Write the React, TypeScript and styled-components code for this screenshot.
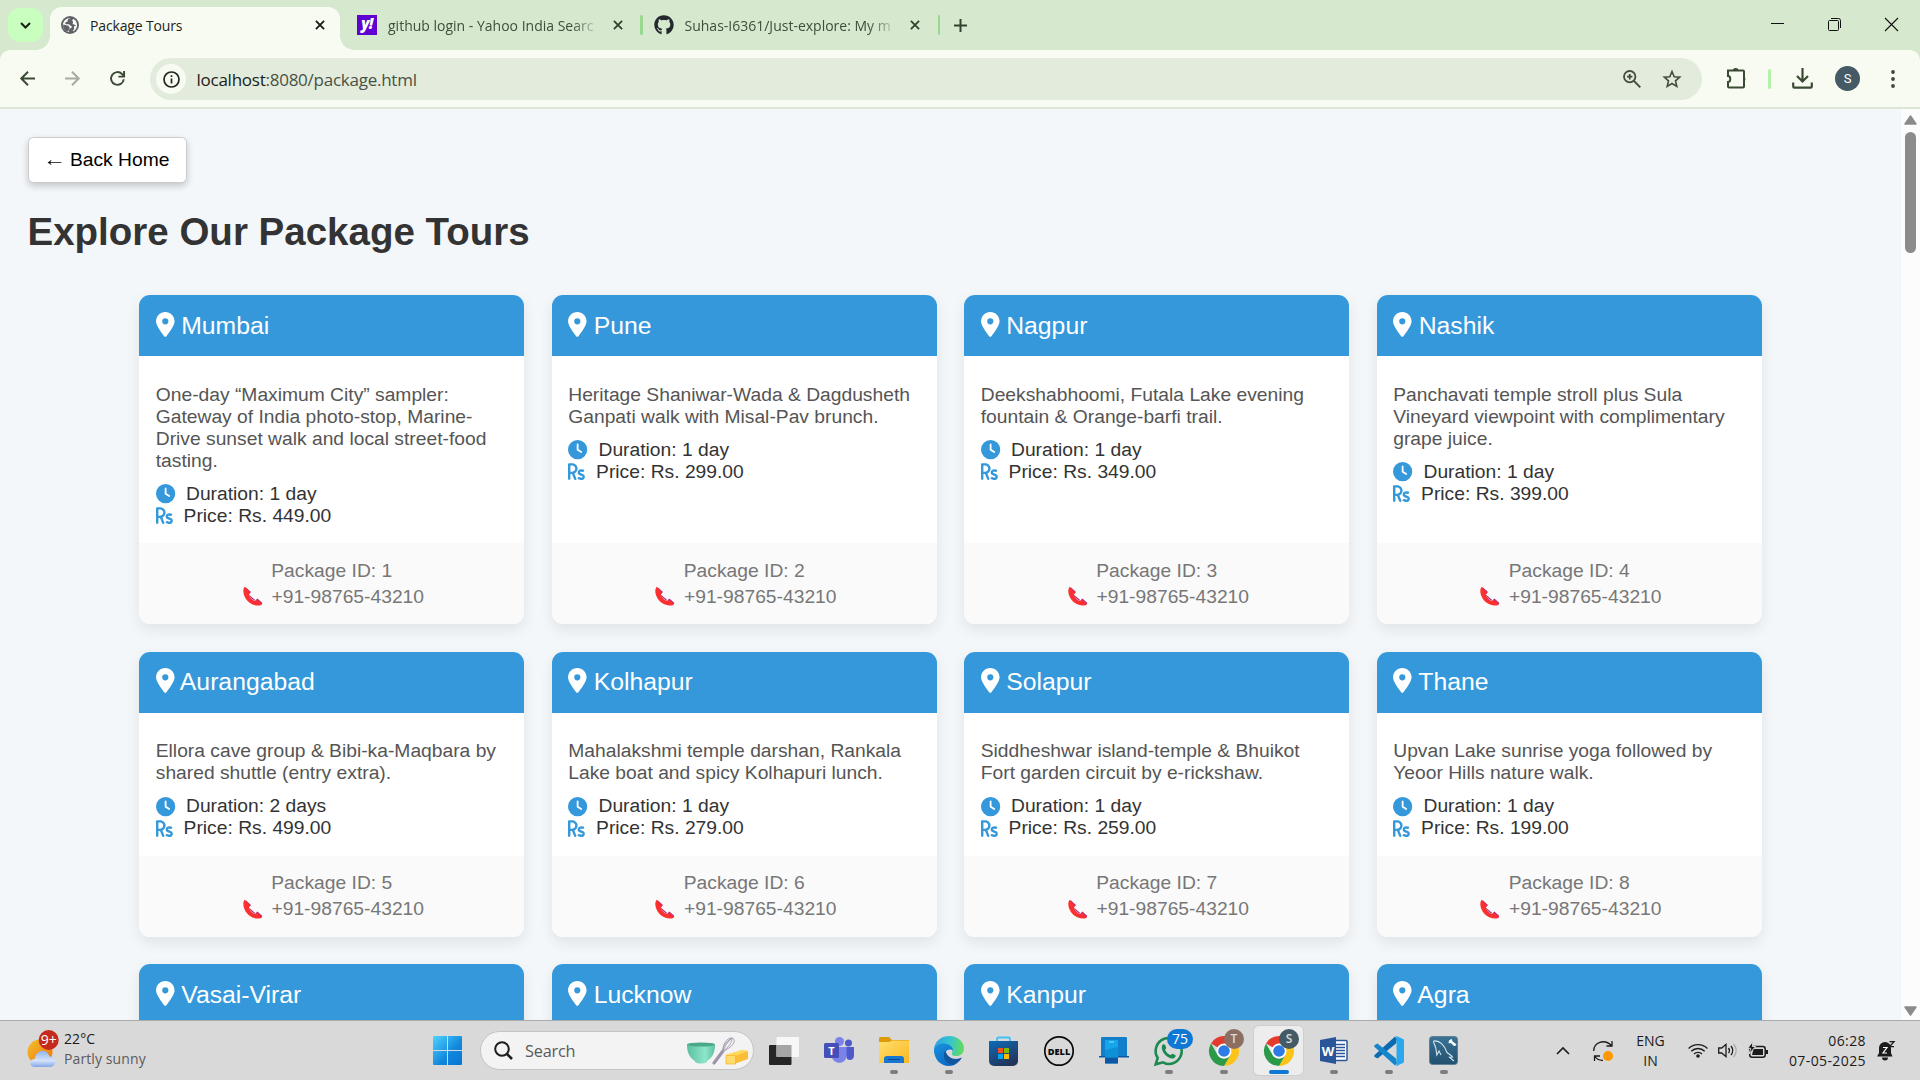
import React from "react";
import styled, { createGlobalStyle } from "styled-components";
import { FaClock, FaLocationDot, FaRupeeSign, FaGithub } from "react-icons/fa6";

const GlobalStyle = createGlobalStyle`
  * { box-sizing: border-box; }
  html, body { margin: 0; padding: 0; }
  body { width: 1920px; height: 1080px; overflow: hidden; font-family: "Liberation Sans", Arial, sans-serif; }
  svg { display: block; flex: none; overflow: visible; }
`;

const ui = `"Open Sans", "Noto Sans", sans-serif`;

const Screen = styled.div`
  width: 1920px;
  height: 1080px;
  display: flex;
  flex-direction: column;
  background: #d6e8ce;
`;

/* ---------- tab strip ---------- */

const TabStrip = styled.header`
  height: 50px;
  flex: none;
  display: flex;
  align-items: stretch;
  font-family: ${ui};
  font-size: 14px;
  color: #3b4a37;
`;

const TabSearch = styled.button`
  width: 35px;
  height: 34px;
  margin: 8px 7px 0 8px;
  padding: 0;
  border: 0;
  border-radius: 12px;
  background: #c8ffbe;
  display: grid;
  place-items: center;
`;

const Tab = styled.div<{ $active?: boolean; $width: number; $end: number }>`
  position: relative;
  width: ${(p) => p.$width}px;
  margin-top: 7px;
  padding: 0 ${(p) => p.$end}px 7px 11px;
  display: flex;
  align-items: center;
  color: ${(p) => (p.$active ? "#1c1f1a" : "#3f4d3a")};
  background: ${(p) => (p.$active ? "#f8fbf2" : "transparent")};
  border-radius: 12px 12px 0 0;
  ${(p) =>
    p.$active &&
    `&::before, &::after {
      content: "";
      position: absolute;
      bottom: 0;
      width: 14px;
      height: 14px;
    }
    &::before { left: -14px; background: radial-gradient(circle at 0 0, transparent 13.5px, #f8fbf2 14px); }
    &::after { right: -14px; background: radial-gradient(circle at 100% 0, transparent 13.5px, #f8fbf2 14px); }`}
`;

const TabTitle = styled.span<{ $fade?: boolean; $spacing?: number }>`
  flex: 1;
  min-width: 0;
  margin: 1px 12px 0 11px;
  white-space: nowrap;
  letter-spacing: ${(p) => p.$spacing ?? 0}px;
  ${(p) => p.$fade && "mask-image: linear-gradient(90deg, #000 86%, transparent 100%);"}
`;

const YahooMark = styled.span`
  width: 20px;
  height: 20px;
  background: #5f01d1;
  color: #fff;
  font: italic 800 15px/17px ${ui};
  text-align: center;
  letter-spacing: -0.5px;
`;

const TabDivider = styled.i<{ $color: string; $top: number; $left?: number }>`
  width: 2.5px;
  height: 20px;
  margin-top: ${(p) => p.$top}px;
  margin-left: ${(p) => p.$left ?? 0}px;
  border-radius: 2px;
  background: ${(p) => p.$color};
`;

const NewTab = styled.span`
  width: 41px;
  display: grid;
  place-items: center;
`;

const WindowControls = styled.div`
  margin-left: auto;
  display: flex;
`;

const WindowButton = styled.span<{ $rise?: number }>`
  width: 57px;
  padding-bottom: ${(p) => p.$rise ?? 1}px;
  display: grid;
  place-items: center;
`;

/* ---------- toolbar ---------- */

const Toolbar = styled.nav`
  height: 59px;
  flex: none;
  display: flex;
  align-items: center;
  padding: 0 7px 0 5px;
  background: #f8fbf2;
  border-bottom: 2px solid #dde5d7;
  border-radius: 10px 10px 0 0;
`;

const Slot = styled.span<{ $width: number; $left?: number }>`
  width: ${(p) => p.$width}px;
  margin-left: ${(p) => p.$left ?? 0}px;
  flex: none;
  display: grid;
  place-items: center;
`;

const AddressBar = styled.div`
  width: 1552px;
  height: 42px;
  margin-left: 10px;
  margin-top: 1px;
  padding: 0 10px 0 6px;
  display: flex;
  align-items: center;
  border-radius: 21px;
  background: #e3ebdc;
`;

const InfoBadge = styled.span`
  width: 30px;
  height: 30px;
  border-radius: 50%;
  background: #f8fbf2;
  display: grid;
  place-items: center;
`;

const Url = styled.span`
  flex: 1;
  margin-left: 10.5px;
  padding-top: 1px;
  font: 17px/24px ${ui};
  letter-spacing: -0.25px;
  color: #4a5145;
  b { font-weight: 400; color: #1a1c18; }
`;

const Avatar = styled.span`
  width: 25px;
  height: 25px;
  border-radius: 50%;
  background: #455a64;
  color: #fff;
  font: 13px/25px Roboto, sans-serif;
  text-align: center;
`;

/* ---------- page ---------- */

const Viewport = styled.div`
  height: 911px;
  flex: none;
  display: flex;
  overflow: hidden;
`;

const Page = styled.main`
  flex: 1;
  height: 911px;
  overflow: hidden;
  padding: 28px 27.5px 0;
  background: #f4f7fa;
  color: #333;
`;

const BackButton = styled.button`
  display: block;
  height: 46px;
  padding: 0 16.8px;
  border: 1px solid #ccc;
  border-radius: 5.5px;
  background: #fff;
  box-shadow: 0 3px 7px rgba(0, 0, 0, 0.2);
  font: 19.25px/22px "Liberation Sans", Arial, sans-serif;
  color: #000;
  white-space: nowrap;
`;

const Arrow = styled.span`
  display: inline-block;
  transform: scaleX(1.2);
`;

const Title = styled.h1`
  margin: 27px 0 41px;
  font-size: 38.5px;
  line-height: 44px;
  color: #333;
`;

const CardGrid = styled.section`
  display: grid;
  grid-template-columns: repeat(4, 385px);
  justify-content: center;
  gap: 27.5px;
`;

const Card = styled.article`
  display: flex;
  flex-direction: column;
  overflow: hidden;
  border-radius: 11px;
  background: #fff;
  box-shadow: 0 5.5px 14px rgba(0, 0, 0, 0.08);
  font-size: 19.25px;
  line-height: 22px;
`;

const CardHeader = styled.header`
  height: 61px;
  flex: none;
  display: flex;
  align-items: center;
  padding: 0 16.5px;
  background: #3498db;
  color: #fff;
  font-size: 24.75px;
  white-space: pre;
`;

const PinIcon = styled(FaLocationDot)`
  width: 18.6px;
  height: 24.75px;
  margin-top: -3px;
`;

const RupeeIcon = styled(FaRupeeSign)`
  width: 16.85px;
  height: 19.25px;
`;

const CardBody = styled.div`
  flex: 1;
  padding: 27.5px 16.5px 16.5px;
`;

const Description = styled.p`
  margin: 0 0 11px;
  color: #555;
`;

const Fact = styled.div`
  display: flex;
  align-items: center;
  gap: 11px;
  height: 22px;
  svg { color: #3498db; margin-top: 1px; }
`;

const CardFooter = styled.footer`
  height: 81px;
  flex: none;
  padding: 16.5px;
  display: flex;
  flex-direction: column;
  align-items: center;
  gap: 4px;
  background: #fafafa;
  color: #777;
`;

const Phone = styled.span`
  display: flex;
  align-items: center;
  gap: 8.5px;
  padding-left: 3.5px;
  svg { margin-top: -1px; }
`;

const ScrollTrack = styled.aside`
  width: 19px;
  flex: none;
  display: flex;
  flex-direction: column;
  align-items: center;
  justify-content: space-between;
  padding: 6px 0 4px 0;
  background: #fcfcfc;
`;

const ScrollThumb = styled.i`
  width: 11px;
  height: 121px;
  margin: 7px 0 auto;
  border-radius: 6px;
  background: #8b8b8b;
`;

/* ---------- taskbar ---------- */

const Taskbar = styled.footer`
  height: 60px;
  flex: none;
  display: flex;
  align-items: center;
  background: #d9d9d9;
  border-top: 1px solid #a9acae;
  font-family: ${ui};
  color: #1b1b1b;
`;

const Weather = styled.div`
  width: 405px;
  padding-left: 28px;
  padding-bottom: 3px;
  display: flex;
  align-items: center;
  gap: 5px;
`;

const TwoLines = styled.div<{ $align: string; $width?: number; $spacing?: number }>`
  display: flex;
  flex-direction: column;
  text-align: ${(p) => p.$align};
  width: ${(p) => (p.$width ? p.$width + "px" : "auto")};
  letter-spacing: ${(p) => p.$spacing ?? 0}px;
  font-size: 14px;
  line-height: 20px;
  white-space: nowrap;
`;

const Muted = styled.span`
  color: #5b5b5b;
`;

const SearchPill = styled.div`
  width: 274px;
  height: 39px;
  margin: 0 2.5px 0 0;
  padding: 0 4px 0 13px;
  display: flex;
  align-items: center;
  border: 1px solid #c3c3c3;
  border-radius: 20px;
  background: #f3f3f3;
  color: #5a5a5a;
  font-size: 16.3px;
  span { flex: 1; margin-left: 12.5px; letter-spacing: -0.2px; }
`;

const AppButton = styled.div<{ $active?: boolean }>`
  position: relative;
  width: 49px;
  height: 49px;
  margin: 0 3px;
  display: grid;
  place-items: center;
  border-radius: 5px;
  background: ${(p) => (p.$active ? "#ededed" : "transparent")};
  box-shadow: ${(p) => (p.$active ? "0 0 0 1px #cfcfcf" : "none")};
`;

const Running = styled.i<{ $active?: boolean }>`
  position: absolute;
  bottom: 1px;
  left: 50%;
  transform: translateX(-50%);
  width: ${(p) => (p.$active ? 20 : 8)}px;
  height: 4px;
  border-radius: 2px;
  background: ${(p) => (p.$active ? "#0f78d4" : "#7d7d7d")};
`;

const Badge = styled.b<{ $bg: string; $wide?: boolean }>`
  position: absolute;
  top: 3px;
  left: ${(p) => (p.$wide ? 23 : 25)}px;
  width: ${(p) => (p.$wide ? 26 : 20)}px;
  height: 20px;
  border-radius: 10px;
  background: ${(p) => p.$bg};
  color: ${(p) => (p.$wide ? "#fff" : "#dcdcdc")};
  font: ${(p) => (p.$wide ? 400 : 600)} ${(p) => (p.$wide ? 14 : 12)}px/20px ${ui};
  text-align: center;
`;

const Tray = styled.div`
  margin-left: auto;
  display: flex;
  align-items: center;
`;

/* ---------- icons ---------- */

const Close = ({ color = "#34422f" }: { color?: string }) => (
  <svg width="10" height="10" viewBox="0 0 11 11" stroke={color} strokeWidth="2">
    <path d="M1 1l9 9M10 1l-9 9" />
  </svg>
);

const Globe = () => (
  <svg width="18" height="18" viewBox="0 0 18 18">
    <circle cx="9" cy="9" r="9" fill="#5f6368" />
    <path
      d="M9.200 1.900c-.8.800-2 .8-2.400 1.900-.3.900.1 1.500-.7 2-.8.600-1.700.3-1.900 1.200-.1.700.3 1.100 1.200 1.200h2.300c1.100.1 1 1.400 2 1.600 1 .1 1.300.7.9 1.600-.4.800-1.600.8-2.200 1.600-.5.700-.1 1.600-.6 2.900-3.500-.3-6-3.400-5.900-7C2 4.800 5.500 1.800 9.200 1.900z"
      fill="#f8fbf2"
    />
    <path
      d="M16 8.300c.4 3.200-1.200 5.900-3.900 7.100-.3-1 .6-1.500 1-2.400.3-.9-.4-1.500-.2-2.300.3-.9 1.600-.6 2.100-1.200-.8-.9-2.400-.3-3.200-1.200-.6-.8.400-1.500.2-2.400-.1-.6-.9-.9-.8-1.600.1-.7 1-.9 1.400-1.400C14.600 4.200 15.800 6 16 8.300z"
      fill="#f8fbf2"
    />
    <path d="M2.300 8.500l5 1.200 1.500 2-1 2.600-1.500 1.500C3.500 15 1.500 12 2.300 8.500z" fill="#5f6368" />
  </svg>
);

const PhoneReceiver = () => (
  <svg width="20" height="20" viewBox="0 0 20 20">
    <path d="M2.500 1l5.500 5-2.300 2.400c1 2.700 3.500 5.300 6.400 6.400l2.300-2.300 5 4.500-1.400 2-14-12z" fill="#b4277f" />
    <path d="M1.800.8C0 2.500-.2 6.400 1.600 10.600c2.600 6 9.400 10 15.200 8.800 1-.3 1.600-.8 2.100-1.500l-4.600-4.100-2 1.300c-3-1-5.600-3.600-6.400-6.700l1.300-2z" fill="#fb3030" />
  </svg>
);

const CloudSun = () => (
  <svg width="31" height="38" viewBox="0 0 31 38">
    <defs>
      <linearGradient id="sun" x1="0" y1="0" x2="1" y2="1">
        <stop offset="0" stopColor="#f2c22d" />
        <stop offset="1" stopColor="#f0700e" />
      </linearGradient>
      <linearGradient id="cloud" x1="0" y1="0" x2="0" y2="1">
        <stop offset="0" stopColor="#8eb4ee" />
        <stop offset=".6" stopColor="#d5e4fb" />
        <stop offset="1" stopColor="#84a5e6" />
      </linearGradient>
    </defs>
    <circle cx="12" cy="22" r="12.5" fill="url(#sun)" />
    <path d="M7 37c-6.500 0-6-8 0-8.300C8 19 19 18 21.500 26.500c7.500-.8 8 10 .5 10.500z" fill="url(#cloud)" />
    <circle cx="20.700" cy="10" r="10" fill="#c42b1c" />
    <text x="20.700" y="15" textAnchor="middle" fontSize="14" fill="#fff" fontFamily="Open Sans">
      9+
    </text>
  </svg>
);

const Windows = () => (
  <svg width="29" height="29" viewBox="0 0 29 29">
    <defs>
      <linearGradient id="win" gradientUnits="userSpaceOnUse" x1="0" y1="0" x2="29" y2="29">
        <stop offset="0" stopColor="#4fd3ff" />
        <stop offset=".6" stopColor="#1187dc" />
        <stop offset="1" stopColor="#0675d2" />
      </linearGradient>
    </defs>
    <path d="M1 0h13v14H0V1a1 1 0 011-1zM15 0h13a1 1 0 011 1v13H15zM0 15h14v14H1a1 1 0 01-1-1zM15 15h14v13a1 1 0 01-1 1H15z" fill="url(#win)" />
  </svg>
);

const Baking = () => (
  <svg width="62" height="28" viewBox="0 0 62 28">
    <defs>
      <linearGradient id="bowl">
        <stop offset="0" stopColor="#5cbf9f" />
        <stop offset=".65" stopColor="#8de6ca" />
        <stop offset="1" stopColor="#5fbfa2" />
      </linearGradient>
    </defs>
    <path d="M0 8h28c0 8-3 13-8 16v1c-3 2-9 2-12 0v-1C3 21 0 16 0 8z" fill="url(#bowl)" />
    <ellipse cx="14" cy="7.500" rx="14" ry="2" fill="#4aa989" />
    <path d="M27 26L36 14" stroke="#9d93ad" strokeWidth="3.200" strokeLinecap="round" />
    <path d="M36 14c-1-5 4-14 9-13s2 9-9 13zM36 14c2-5 5-10 9-13M36 14c0-6 5-11 9-13M36 14c5-3 9-8 9-13" fill="none" stroke="#a7a0b2" strokeWidth="1" />
    <path d="M39 18l16-5 6 1v8l-14 5-8-.5z" fill="#fbbd35" />
    <path d="M39 18l16-5 6 1-13 5z" fill="#ffd95f" />
    <path d="M39 18.500h9.500v8.500H39z" fill="#ffdb70" stroke="#f7b92d" strokeWidth=".8" />
  </svg>
);

const TaskView = () => (
  <svg width="30" height="28" viewBox="0 0 30 28">
    <rect y="8" width="22.500" height="20" rx="1" fill="#262626" />
    <rect x="7.500" width="22.500" height="20" rx="1" fill="#f7f7f7" />
    <path d="M7.500 8h15v12h-15z" fill="#a5a5a5" />
  </svg>
);

const Teams = () => (
  <svg width="30" height="27" viewBox="0 0 30 27">
    <circle cx="24.500" cy="6" r="3.500" fill="#5059c9" />
    <path d="M20 10h10v8c0 5-4 6-7 4z" fill="#5059c9" />
    <circle cx="15.500" cy="4.500" r="4.500" fill="#7b83eb" />
    <path d="M8 10h14.500v9c0 9-14.500 9-14.500 0z" fill="#7b83eb" />
    <rect y="6" width="15" height="15" rx="1.500" fill="#464eb8" />
    <text x="7.500" y="17.500" textAnchor="middle" fontSize="11" fontWeight="700" fill="#fff" fontFamily="Open Sans">T</text>
  </svg>
);

const Explorer = () => (
  <svg width="30" height="27" viewBox="0 0 30 27">
    <defs>
      <linearGradient id="folder" x1="0" y1="0" x2="1" y2="1">
        <stop offset="0" stopColor="#ffdf70" />
        <stop offset="1" stopColor="#fbb81d" />
      </linearGradient>
    </defs>
    <path d="M0 1.500A1.500 1.500 0 011.500 0H10l3 3h17v4H0z" fill="#dd9b0b" />
    <path d="M0 5h10l3-1.500h17V26H0z" fill="url(#folder)" />
    <path d="M5 26v-4a3 3 0 013-3h14a3 3 0 013 3v4z" fill="#1577cf" />
    <path d="M9 22.500h12" stroke="#0b4a8c" strokeWidth="1" />
  </svg>
);

const Edge = () => (
  <svg width="30" height="30" viewBox="0 0 30 30">
    <defs>
      <linearGradient id="edgeTop" x1="0" y1=".4" x2="1" y2=".5">
        <stop offset="0" stopColor="#2f9fe0" />
        <stop offset=".5" stopColor="#34c3d2" />
        <stop offset="1" stopColor="#64dd55" />
      </linearGradient>
      <linearGradient id="edgeBody" x1="0" y1="0" x2=".6" y2="1">
        <stop offset="0" stopColor="#1a93dd" />
        <stop offset="1" stopColor="#0968c4" />
      </linearGradient>
    </defs>
    <path d="M0 14C0 6 7 0 15 0c9 0 15 6 15 12.500 0 5-4 7.500-7.500 7.500-4 0-5.500-1.500-4.500-3 2-3-.5-6.500-5-6.500C6 10.500 1 15 0 18z" fill="url(#edgeTop)" />
    <path d="M0 14c1-4 5-6.500 9.500-6.500 6 0 10 4 9.500 7.500-1-2-6.500-2.500-7.500 2-1.500 7 5 12 12 10-2.500 2-5.500 3-8.500 3C6.500 30 0 23 0 14z" fill="url(#edgeBody)" />
    <path d="M11.500 14.500C8 18 10 27.500 18 29c4-1 8-3.500 10-7.500-7 3.500-15 .5-16.500-7z" fill="#12569f" />
  </svg>
);

const Store = () => (
  <svg width="29" height="30" viewBox="0 0 29 30">
    <defs>
      <linearGradient id="store" x1="0" y1="0" x2=".5" y2="1">
        <stop offset="0" stopColor="#0c6bb8" />
        <stop offset="1" stopColor="#22365c" />
      </linearGradient>
    </defs>
    <path d="M8 6V3a1.500 1.500 0 011.500-1.500h10A1.500 1.500 0 0121 3v3" fill="none" stroke="#3cc3f5" strokeWidth="1.800" />
    <path d="M0 5h29v20a5 5 0 01-5 5H5a5 5 0 01-5-5z" fill="url(#store)" />
    <path d="M9 12h5v5H9z" fill="#f25022" />
    <path d="M15 12h5v5h-5z" fill="#7fba00" />
    <path d="M9 18h5v5H9z" fill="#00a4ef" />
    <path d="M15 18h5v5h-5z" fill="#ffb900" />
  </svg>
);

const Dell = () => (
  <svg width="30" height="30" viewBox="0 0 30 30">
    <circle cx="15" cy="15" r="14.200" fill="none" stroke="#0b0b0b" strokeWidth="1.700" />
    <text x="15" y="18.500" textAnchor="middle" fontSize="9.500" fontWeight="800" textLength="22.500" lengthAdjust="spacingAndGlyphs" fill="#0b0b0b" fontFamily="Open Sans">DELL</text>
  </svg>
);

const PhoneLink = () => (
  <svg width="30" height="27" viewBox="0 0 30 27">
    <path d="M2 1a1 1 0 011-1h24a1 1 0 011 1v18H2z" fill="#127fcd" />
    <path d="M0 19h30v1.500H0z" fill="#0b5aa6" />
    <rect x="6" y="3" width="13" height="23.500" rx="1" fill="#18a4e8" />
    <path d="M6 13l13-3v10H6z" fill="#0f8fd8" />
    <path d="M6 20.500h13v6H6z" fill="#0d56a3" />
    <path d="M10 5h5" stroke="#7be4ff" />
  </svg>
);

const WhatsApp = () => (
  <svg width="30" height="30" viewBox="0 0 30 30">
    <path d="M1.700 28.300l2-6.300A13 13 0 1115.500 28c-2.400 0-4.600-.6-6.500-1.700z" fill="none" stroke="#1c8a50" strokeWidth="2.600" />
    <path d="M8 9.500c1-1.800 2.700-1.700 3.300-.2l.9 2.300c.3.800-1.200 1.800-1 2.400 1 2.200 2.700 3.900 5 4.900.7.3 1.600-1.400 2.400-1.200l2.600 1.200c1.200.6 0 2.700-1.300 3.300C15.200 24.300 6.200 16 8 9.500z" fill="#1c8a50" />
  </svg>
);

const Chrome = () => (
  <svg width="30" height="30" viewBox="0 0 48 48">
    <path d="M24 24L3.200 12A24 24 0 0144.800 12z" fill="#e33b2e" />
    <path d="M24 12h20.800A24 24 0 0124 48l10.400-18z" fill="#fcc419" />
    <path d="M3.200 12l10.400 18A12 12 0 0034.400 30L24 48A24 24 0 013.200 12z" fill="#2b9a48" />
    <circle cx="24" cy="24" r="12" fill="#fff" />
    <circle cx="24" cy="24" r="9.300" fill="#2d7be5" />
  </svg>
);

const Word = () => (
  <svg width="28" height="27" viewBox="0 0 28 27">
    <rect x="14" y="3.500" width="13" height="20" rx="1" fill="#fff" stroke="#2b579a" strokeWidth="1.500" />
    <path d="M16 7.500h9M16 10.500h9M16 13.500h9M16 16.500h9M16 19.500h9" stroke="#2b579a" strokeWidth="1.500" />
    <path d="M0 3l16-3v27L0 24z" fill="#2a5699" />
    <text x="8" y="18.500" textAnchor="middle" fontSize="13" fontWeight="700" fill="#fff" fontFamily="Open Sans">W</text>
  </svg>
);

const VSCode = () => (
  <svg width="30" height="30" viewBox="0 0 30 30">
    <path d="M22 7.500L3.500 22.500.8 21c-.8-.6-.8-1.400-.2-2L21 .5 23 3z" fill="#0c6bb0" />
    <path d="M22 22.500L3.500 7.500.8 9c-.8.600-.8 1.400-.2 2L21 29.500l2-2.500z" fill="#1585cc" />
    <path d="M21 .3c.8-.4 1.300-.4 2 0l6 2.800c.6.3 1 .9 1 1.600v20.600c0 .7-.4 1.300-1 1.600l-6 2.800c-.7.400-1.200.400-2 0 .7.300 1.500-.3 1.500-1.200V1.500c0-.9-.8-1.500-1.500-1.200z" fill="#29a8ee" />
  </svg>
);

const MySQL = () => (
  <svg width="29" height="29" viewBox="0 0 29 29">
    <defs>
      <linearGradient id="sql" x1="0" y1="0" x2="0" y2="1">
        <stop offset="0" stopColor="#3a7396" />
        <stop offset="1" stopColor="#22506f" />
      </linearGradient>
    </defs>
    <rect x=".5" y=".5" width="28" height="28" rx="3" fill="url(#sql)" stroke="#5f7f92" />
    <path d="M4.500 5c6-1 11 4 13.500 11.500 1 1 4 2.500 5.500 4.500l-3 .2L25 25M4.500 5c.2 3 2 5 2.500 8l.8 6 2.200-4 2 4" fill="none" stroke="#d5e6ef" strokeWidth="1.100" />
    <path d="M20.500 4.500l2-1 .5 2 4 3-1.500 1.500-3.500-3.500-2 .5z" fill="#fff" stroke="#fff" />
  </svg>
);

/* ---------- data ---------- */

type Tour = { city: string; text: string; days: string; price: string };

const tours: Tour[] = [
  { city: "Mumbai", text: "One-day “Maximum City” sampler: Gateway of India photo-stop, Marine-Drive sunset walk and local street-food tasting.", days: "1 day", price: "449.00" },
  { city: "Pune", text: "Heritage Shaniwar-Wada & Dagdusheth Ganpati walk with Misal-Pav brunch.", days: "1 day", price: "299.00" },
  { city: "Nagpur", text: "Deekshabhoomi, Futala Lake evening fountain & Orange-barfi trail.", days: "1 day", price: "349.00" },
  { city: "Nashik", text: "Panchavati temple stroll plus Sula Vineyard viewpoint with complimentary grape juice.", days: "1 day", price: "399.00" },
  { city: "Aurangabad", text: "Ellora cave group & Bibi-ka-Maqbara by shared shuttle (entry extra).", days: "2 days", price: "499.00" },
  { city: "Kolhapur", text: "Mahalakshmi temple darshan, Rankala Lake boat and spicy Kolhapuri lunch.", days: "1 day", price: "279.00" },
  { city: "Solapur", text: "Siddheshwar island-temple & Bhuikot Fort garden circuit by e-rickshaw.", days: "1 day", price: "259.00" },
  { city: "Thane", text: "Upvan Lake sunrise yoga followed by Yeoor Hills nature walk.", days: "1 day", price: "199.00" },
];

const nextCities = ["Vasai-Virar", "Lucknow", "Kanpur", "Agra"];

const CityHeader = ({ city }: { city: string }) => (
  <CardHeader>
    <PinIcon />
    <span>{" " + city}</span>
  </CardHeader>
);

const TourCard = ({ tour, id }: { tour: Tour; id: number }) => (
  <Card>
    <CityHeader city={tour.city} />
    <CardBody>
      <Description>{tour.text}</Description>
      <Fact>
        <FaClock size={19.25} />
        Duration: {tour.days}
      </Fact>
      <Fact>
        <RupeeIcon />
        Price: Rs. {tour.price}
      </Fact>
    </CardBody>
    <CardFooter>
      <span>Package ID: {id}</span>
      <Phone>
        <PhoneReceiver />
        +91-98765-43210
      </Phone>
    </CardFooter>
  </Card>
);

const apps: { icon: React.ReactNode; running?: boolean; active?: boolean; badge?: string; color?: string }[] = [
  { icon: <TaskView /> },
  { icon: <Teams /> },
  { icon: <Explorer />, running: true },
  { icon: <Edge />, running: true },
  { icon: <Store /> },
  { icon: <Dell /> },
  { icon: <PhoneLink /> },
  { icon: <WhatsApp />, running: true, badge: "75", color: "#0f78d4" },
  { icon: <Chrome />, running: true, badge: "T", color: "#8d6e63" },
  { icon: <Chrome />, running: true, active: true, badge: "S", color: "#455a64" },
  { icon: <Word />, running: true },
  { icon: <VSCode />, running: true },
  { icon: <MySQL />, running: true },
];

export default function App() {
  return (
    <Screen>
      <GlobalStyle />
      <TabStrip>
        <TabSearch>
          <svg width="11" height="7" viewBox="0 0 11 7" fill="none" stroke="#16220f" strokeWidth="2"><path d="M1 1l4.500 4.500L10 1" /></svg>
        </TabSearch>
        <Tab $active $width={290} $end={15}>
          <Globe />
          <TabTitle $spacing={-0.15}>Package Tours</TabTitle>
          <Close color="#171d14" />
        </Tab>
        <Slot $width={6} />
        <Tab $width={294} $end={17.5}>
          <YahooMark>y!</YahooMark>
          <TabTitle $fade $spacing={0}>github login - Yahoo India Searc</TabTitle>
          <Close />
        </Tab>
        <TabDivider $color="#98d891" $top={15} />
        <Tab $width={295} $end={18}>
          <FaGithub size={20} color="#24292f" />
          <TabTitle $fade $spacing={0}>Suhas-I6361/Just-explore: My m</TabTitle>
          <Close />
        </Tab>
        <TabDivider $color="#98d891" $top={15} />
        <NewTab>
          <svg width="13" height="13" viewBox="0 0 13 13" stroke="#34422f" strokeWidth="2"><path d="M6.500 0v13M0 6.500h13" /></svg>
        </NewTab>
        <WindowControls>
          <WindowButton $rise={3}><svg width="13" height="1" viewBox="0 0 13 1"><path d="M0 0h13v1H0z" fill="#111" /></svg></WindowButton>
          <WindowButton>
            <svg width="13" height="13" viewBox="0 0 13 13" fill="none" stroke="#111"><rect x=".5" y="2.500" width="10" height="10" rx="1" /><path d="M3 .5h7.500a2 2 0 012 2V10" /></svg>
          </WindowButton>
          <WindowButton><svg width="13" height="13" viewBox="0 0 13 13" stroke="#111" strokeWidth="1.100"><path d="M0 0l13 13M13 0L0 13" /></svg></WindowButton>
        </WindowControls>
      </TabStrip>

      <Toolbar>
        <Slot $width={45}>
          <svg width="15" height="15" viewBox="0 0 15 15" fill="none" stroke="#3a4a34" strokeWidth="2"><path d="M15 7.500H1.500M8 .7L1.300 7.500 8 14.300" /></svg>
        </Slot>
        <Slot $width={45}>
          <svg width="15" height="15" viewBox="0 0 15 15" fill="none" stroke="#a5aca0" strokeWidth="2"><path d="M0 7.500h13.500M7 .7l6.700 6.800L7 14.300" /></svg>
        </Slot>
        <Slot $width={45}>
          <svg width="15" height="15" viewBox="0 0 16 16" fill="none" stroke="#3a4a34" strokeWidth="2.100"><path d="M14.700 8.800A6.800 6.800 0 1112.900 3.300L14.500 5" /><path d="M15 0v6H9" /></svg>
        </Slot>
        <AddressBar>
          <InfoBadge>
            <svg width="17" height="17" viewBox="0 0 17 17" fill="none" stroke="#1f281b" strokeWidth="1.700"><circle cx="8.500" cy="8.500" r="7.500" /><path d="M8.500 7.500v5M8.500 4.300v1.800" /></svg>
          </InfoBadge>
          <Url><b>localhost</b>:8080/package.html</Url>
          <Slot $width={40}>
            <svg width="18" height="18" viewBox="0 0 18 18" fill="none" stroke="#424b3d" strokeWidth="1.800"><circle cx="6.700" cy="6.700" r="5.700" /><path d="M11 11l6.300 6.300M6.700 4v5.400M4 6.700h5.400" /></svg>
          </Slot>
          <Slot $width={40}>
            <svg width="18" height="18" viewBox="0 0 18 18" fill="none" stroke="#424b3d" strokeWidth="1.600"><path d="M9 1.500l2.200 5.200 5.500.5-4.200 3.700 1.300 5.500L9 13.500l-4.800 2.900 1.300-5.500-4.200-3.700 5.500-.5z" /></svg>
          </Slot>
        </AddressBar>
        <Slot $width={40} $left={14}>
          <svg width="21" height="21" viewBox="0 0 21 21" fill="none" stroke="#3a4a34" strokeWidth="2"><path d="M2 2.500h15a1 1 0 011 1v15a1 1 0 01-1 1H3a1 1 0 01-1-1v-4.500c3 0 3-6 0-6v-5z" /><path d="M7 2.500a2.700 2.400 0 015.400 0zM18 8.500a2.300 2.700 0 010 5z" fill="#3a4a34" stroke="none" /></svg>
        </Slot>
        <TabDivider $color="#b4f2a9" $top={0} $left={12} />
        <Slot $width={40} $left={12}>
          <svg width="21" height="21" viewBox="0 0 21 21" fill="none" stroke="#3a4a34" strokeWidth="2.200"><path d="M10.500 0v13M5 8l5.500 5.500L16 8M1.200 14.500v4a1.200 1.200 0 001.200 1.200h16.200a1.200 1.200 0 001.200-1.200v-4" /></svg>
        </Slot>
        <Slot $width={40} $left={5}><Avatar>S</Avatar></Slot>
        <Slot $width={40} $left={5}>
          <svg width="4" height="18" viewBox="0 0 4 18" fill="#3a4a34"><circle cx="2" cy="2" r="1.900" /><circle cx="2" cy="9" r="1.900" /><circle cx="2" cy="16" r="1.900" /></svg>
        </Slot>
      </Toolbar>

      <Viewport>
        <Page>
          <BackButton><Arrow>←</Arrow> Back Home</BackButton>
          <Title>Explore Our Package Tours</Title>
          <CardGrid>
            {tours.map((t, i) => <TourCard key={t.city} tour={t} id={i + 1} />)}
            {nextCities.map((c) => <Card key={c}><CityHeader city={c} /><CardBody /></Card>)}
          </CardGrid>
        </Page>
        <ScrollTrack>
          <svg width="13" height="10" viewBox="0 0 13 10"><path d="M6.500 1L12 9H1z" fill="#8b8b8b" stroke="#8b8b8b" strokeLinejoin="round" strokeWidth="1.500" /></svg>
          <ScrollThumb />
          <svg width="13" height="10" viewBox="0 0 13 10"><path d="M6.500 9L12 1H1z" fill="#8b8b8b" stroke="#8b8b8b" strokeLinejoin="round" strokeWidth="1.500" /></svg>
        </ScrollTrack>
      </Viewport>

      <Taskbar>
        <Weather>
          <CloudSun />
          <TwoLines $align="left" $spacing={0.1}><span>22°C</span><Muted>Partly sunny</Muted></TwoLines>
        </Weather>
        <Slot $width={74.5}><Slot $width={55} $left={10}><Windows /></Slot></Slot>
        <SearchPill>
          <svg width="19" height="19" viewBox="0 0 19 19" fill="none" stroke="#1d1d1d" strokeWidth="2"><circle cx="8" cy="8" r="6.800" /><path d="M13 13l5 5" strokeWidth="2.600" /></svg>
          <span>Search</span>
          <Baking />
        </SearchPill>
        {apps.map((a, i) => (
          <AppButton key={i} $active={a.active}>
            {a.icon}
            {a.badge && <Badge $bg={a.color!} $wide={a.badge.length > 1}>{a.badge}</Badge>}
            {a.running && <Running $active={a.active} />}
          </AppButton>
        ))}
        <Tray>
          <Slot $width={30}>
            <svg width="14" height="8" viewBox="0 0 14 8" fill="none" stroke="#1b1b1b" strokeWidth="1.600"><path d="M1 7l6-6 6 6" /></svg>
          </Slot>
          <Slot $width={50}>
            <svg width="20" height="20" viewBox="0 0 20 20" fill="none" stroke="#1b1b1b" strokeWidth="1.300"><path d="M.7 10C.7 2 11-3 18.500 4.500M19 0v5h-5.500M1.500 20v-5H7M1.500 15c2 3 5 4.600 8.500 4.300" /><circle cx="15" cy="15" r="5" fill="#ff9800" stroke="none" /></svg>
          </Slot>
          <TwoLines $align="center" $width={45}><span>ENG</span><span>IN</span></TwoLines>
          <Slot $width={30} $left={10}>
            <svg width="20" height="15" viewBox="0 0 20 15" fill="none" stroke="#1b1b1b" strokeWidth="1.400"><path d="M.6 5.500a13.300 13.300 0 0118.800 0M3.300 8.300a9.500 9.500 0 0113.400 0M6 11a5.700 5.700 0 018 0" /><circle cx="10" cy="13" r="1.800" fill="#1b1b1b" stroke="none" /></svg>
          </Slot>
          <Slot $width={30}>
            <svg width="20" height="15" viewBox="0 0 20 15" fill="none" stroke="#1b1b1b" strokeWidth="1.300"><path d="M.7 5h3L8 1.300v12.400L3.700 10h-3zM10.500 5q2 2.500 0 5M13 3q3.500 4.500 0 9" /><path d="M15.500 1q5.500 6.500 0 13" stroke="#aaa" /></svg>
          </Slot>
          <Slot $width={30}>
            <svg width="20" height="17" viewBox="0 0 20 17"><rect x="1.700" y="4.500" width="15.500" height="10.800" rx="2.500" fill="none" stroke="#1b1b1b" strokeWidth="1.500" /><path d="M5.500 7H15v6H4zM18 8h2v4h-2z" fill="#1b1b1b" /><path d="M4.800-.5L-.3 6.300h3L1 12l6.700-7.500H4.400z" fill="#1b1b1b" stroke="#d9d9d9" strokeWidth="1" /></svg>
          </Slot>
          <TwoLines $align="right" $width={93} $spacing={0.4}><span>06:28</span><span>07-05-2025</span></TwoLines>
          <Slot $width={39}>
            <svg width="18" height="19" viewBox="0 0 18 19"><path d="M2 7a6 6 0 0112 0v5l1.500 3.500H0L2 12zM5 16.500h6a3 3 0 01-6 0z" fill="#1b1b1b" /><path d="M6 6.500h4L6 12h4" stroke="#fff" strokeWidth="1.200" fill="none" /><path d="M12.500.7H17l-4.500 5H17" fill="none" stroke="#1b1b1b" strokeWidth="1.300" /></svg>
          </Slot>
          <Slot $width={15} />
        </Tray>
      </Taskbar>
    </Screen>
  );
}
